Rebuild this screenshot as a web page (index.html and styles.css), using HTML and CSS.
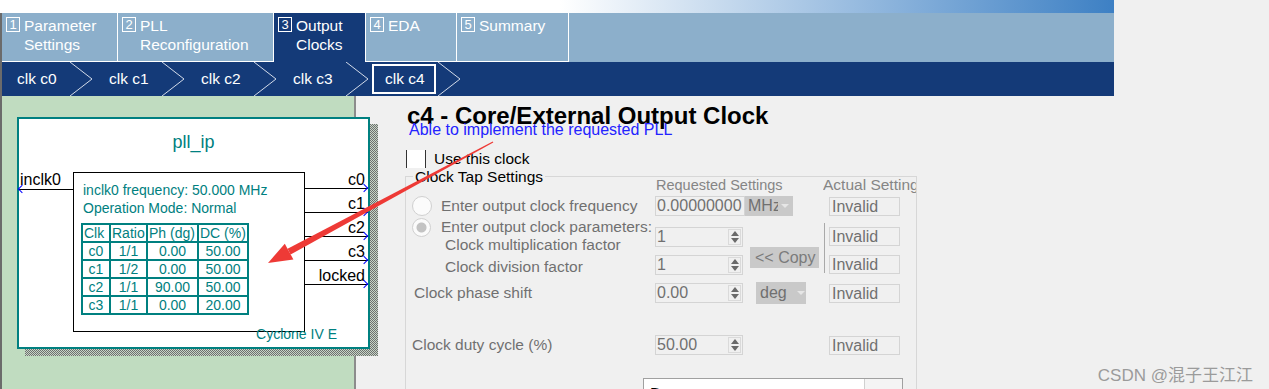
FILE: index.html
```html
<html lang="en">
<head>
    <meta charset="UTF-8">
    <title>ALTPLL - Output Clocks</title>
    <link rel="stylesheet" href="styles.css">
</head>
<body>
    <div class="top-strip"></div>

    <div class="shell">
        <div class="tabs">
            <div class="tab tab-params"><span class="tab-num">1</span><span class="tab-label">Parameter<br>Settings</span></div>
            <div class="tab tab-reconf"><span class="tab-num">2</span><span class="tab-label">PLL<br>Reconfiguration</span></div>
            <div class="tab tab-clocks tab-active"><span class="tab-num">3</span><span class="tab-label">Output<br>Clocks</span></div>
            <div class="tab tab-eda"><span class="tab-num">4</span><span class="tab-label">EDA</span></div>
            <div class="tab tab-summary"><span class="tab-num">5</span><span class="tab-label">Summary</span></div>
        </div>

        <div class="crumbs">
            <div class="crumb"><span class="crumb-text">clk c0</span><svg viewBox="0 0 22 34"><polyline points="0,0 22,17 0,34"/></svg></div>
            <div class="crumb"><span class="crumb-text">clk c1</span><svg viewBox="0 0 22 34"><polyline points="0,0 22,17 0,34"/></svg></div>
            <div class="crumb"><span class="crumb-text">clk c2</span><svg viewBox="0 0 22 34"><polyline points="0,0 22,17 0,34"/></svg></div>
            <div class="crumb"><span class="crumb-text">clk c3</span><svg viewBox="0 0 22 34"><polyline points="0,0 22,17 0,34"/></svg></div>
            <div class="crumb crumb-current"><span class="crumb-text">clk c4</span><svg viewBox="0 0 22 34"><polyline points="0,0 22,17 0,34"/></svg></div>
        </div>

        <div class="main">
            <div class="canvas">
                <div class="diagram-wrap">
                    <div class="diagram">
                        <div class="diagram-title">pll_ip</div>
                        <div class="diagram-row">
                            <div class="ports-in">
                                <div class="port port-in">inclk0</div>
                            </div>
                            <div class="core">
                                <div class="core-line">inclk0 frequency: 50.000 MHz</div>
                                <div class="core-line">Operation Mode: Normal</div>
                                <table class="clk-table">
                                    <tr><th class="col-clk">Clk</th><th class="col-ratio">Ratio</th><th class="col-ph">Ph (dg)</th><th class="col-dc">DC (%)</th></tr>
                                    <tr><td>c0</td><td>1/1</td><td>0.00</td><td>50.00</td></tr>
                                    <tr><td>c1</td><td>1/2</td><td>0.00</td><td>50.00</td></tr>
                                    <tr><td>c2</td><td>1/1</td><td>90.00</td><td>50.00</td></tr>
                                    <tr><td>c3</td><td>1/1</td><td>0.00</td><td>20.00</td></tr>
                                </table>
                            </div>
                            <div class="ports-out">
                                <div class="port port-out port-first">c0</div>
                                <div class="port port-out">c1</div>
                                <div class="port port-out">c2</div>
                                <div class="port port-out">c3</div>
                                <div class="port port-out">locked</div>
                            </div>
                        </div>
                        <div class="diagram-foot">Cyclone IV E</div>
                    </div>
                </div>
            </div>

            <div class="form">
                <div class="form-title">c4 - Core/External Output Clock</div>
                <div class="form-status">Able to implement the requested PLL</div>

                <div class="use-row">
                    <span class="check"></span>
                    <span>Use this clock</span>
                </div>

                <div class="group">
                    <div class="group-title">Clock Tap Settings</div>
                    <div class="head-row">
                        <span class="head-req">Requested Settings</span>
                        <span class="head-act">Actual Settings</span>
                    </div>

                    <div class="row row-freq">
                        <div class="cell-label"><span class="radio"></span>Enter output clock frequency</div>
                        <div class="field">0.00000000</div>
                        <div class="combo combo-mhz"><span class="combo-text">MHz</span><span class="combo-arrow"></span></div>
                        <div class="invalid invalid-freq">Invalid</div>
                    </div>

                    <div class="params">
                        <div class="params-labels">
                            <div class="param-line"><span class="radio radio-on"></span>Enter output clock parameters:</div>
                            <div class="param-line param-sub">Clock multiplication factor</div>
                            <div class="param-line param-sub param-div">Clock division factor</div>
                        </div>
                        <div class="params-req">
                            <div class="spin spin-mult"><span class="spin-val">1</span><span class="spin-btn"><i class="arr-up"></i><i class="arr-down"></i></span></div>
                            <div class="spin spin-div"><span class="spin-val">1</span><span class="spin-btn"><i class="arr-up"></i><i class="arr-down"></i></span></div>
                        </div>
                        <div class="params-mid">
                            <div class="copy">&lt;&lt; Copy</div>
                        </div>
                        <div class="bracket"></div>
                        <div class="params-act">
                            <div class="invalid invalid-mult">Invalid</div>
                            <div class="invalid invalid-div">Invalid</div>
                        </div>
                    </div>

                    <div class="row row-phase">
                        <div class="cell-label label-phase">Clock phase shift</div>
                        <div class="spin"><span class="spin-val">0.00</span><span class="spin-btn"><i class="arr-up"></i><i class="arr-down"></i></span></div>
                        <div class="combo combo-deg"><span class="combo-text">deg</span><span class="combo-arrow"></span></div>
                        <div class="invalid invalid-phase">Invalid</div>
                    </div>

                    <div class="row row-duty">
                        <div class="cell-label label-duty">Clock duty cycle (%)</div>
                        <div class="spin"><span class="spin-val">50.00</span><span class="spin-btn"><i class="arr-up"></i><i class="arr-down"></i></span></div>
                        <div class="invalid invalid-duty">Invalid</div>
                    </div>

                    <div class="select-box">
                        <span class="select-text">Do not use</span>
                        <span class="select-arrow"></span>
                    </div>
                </div>
            </div>
        </div>
    </div>

    <!-- red annotation arrow drawn over the screenshot -->
    <svg class="annot" width="1269" height="389" viewBox="0 0 1269 389">
        <polygon points="493.3,142.5 492.7,141.5 287.6,248.8 290.6,254.4" />
        <polygon points="268,263 284.8,243.7 293.4,259.5" />
    </svg>

    <div class="watermark">CSDN @混子王江江</div>
</body>
</html>
```

FILE: styles.css
```css
* {
    box-sizing: border-box;
}
body {
    margin: 0;
    width: 1269px;
    height: 389px;
    overflow: hidden;
    position: relative;
    background-color: #f0f0f0;
    font-family: "Liberation Sans", Arial, sans-serif;
}
.top-strip {
    width: 1114px;
    height: 13px;
    background: linear-gradient(90deg, #fff 560px, #3d80c4 1114px);
}
.shell {
    border-left: 2px solid #6b6b6b;
}

/* wizard tabs */
.tabs {
    display: flex;
    width: 1112px;
    height: 49px;
    background-color: #8cafcb;
}
.tab {
    display: flex;
    align-items: flex-start;
    padding: 3px 0 0 4px;
    border-right: 1px solid #fff;
    border-bottom: 1px solid #fff;
    color: #fff;
    font-size: 15.5px;
    line-height: 19px;
}
.tab-active {
    background-color: #143a78;
    border-bottom: none;
}
.tab-params { width: 116px; }
.tab-reconf { width: 156px; }
.tab-clocks { width: 92px; }
.tab-eda { width: 91px; }
.tab-summary { width: 112px; }
.tab-num {
    width: 14px;
    height: 15px;
    margin-top: 1px;
    border: 1px solid #fff;
    font-size: 13px;
    line-height: 13px;
    text-align: center;
}
.tab-label {
    margin-left: 4px;
}

/* clock breadcrumb */
.crumbs {
    display: flex;
    width: 1112px;
    height: 34px;
    background-color: #143a78;
    color: #fff;
    font-size: 15.5px;
}
.crumb {
    display: flex;
    align-items: center;
    width: 92px;
}
.crumb-text {
    width: 68px;
    padding-left: 15px;
}
.crumb-current .crumb-text {
    width: 64px;
    height: 30px;
    margin: 0 2px;
    padding-left: 11px;
    border: 2px solid #fff;
    line-height: 26px;
}
.crumb svg {
    display: block;
    width: 22px;
    height: 34px;
}
.crumb polyline {
    fill: none;
    stroke: #d3dbe9;
    stroke-width: 1;
}

.main {
    display: flex;
    height: 293px;
}

/* block diagram */
.canvas {
    flex: none;
    width: 354px;
    padding: 21px 0 0 15px;
    background-color: #c0dcc0;
    border-right: 2px solid #8c8c8c;
}
.diagram-wrap {
    position: relative;
    z-index: 1;
    width: 353px;
}
.diagram-wrap::before {
    content: "";
    position: absolute;
    left: 8px;
    top: 7px;
    right: -8px;
    bottom: -7px;
    background: repeating-conic-gradient(#6f6f6f 0 25%, #c6d6c6 0 50%) 0 0 / 2px 2px;
}
.diagram {
    position: relative;
    border: 2px solid #008080;
    background-color: #fff;
}
.diagram-title {
    padding: 13px 0 20px;
    color: #008080;
    font-size: 18px;
    line-height: 20px;
    text-align: center;
}
.diagram-row {
    display: flex;
}
.ports-in {
    width: 54px;
}
.port {
    position: relative;
    border-bottom: 1px solid #000;
    color: #000;
    font-size: 16px;
    line-height: 16px;
}
.port-in {
    height: 18px;
    padding-left: 1px;
}
.port-in::before {
    content: "";
    position: absolute;
    left: 0;
    bottom: -3px;
    width: 5px;
    height: 5px;
    border-left: 1px solid #00f;
    border-bottom: 1px solid #00f;
    transform: rotate(45deg);
}
.core {
    width: 232px;
    height: 160px;
    padding: 8px 0 0 9px;
    border: 1px solid #000;
    color: #008080;
    font-size: 14px;
}
.core-line {
    line-height: 18px;
}
.clk-table {
    margin: 6px 0 0 -2px;
    border-collapse: collapse;
    color: #008080;
    font-size: 14px;
}
.clk-table th,
.clk-table td {
    height: 18px;
    padding: 0;
    border: 2px solid #008080;
    font-weight: normal;
    line-height: 14px;
    text-align: center;
    white-space: nowrap;
}
.clk-table th {
    padding-left: 1px;
    text-align: left;
}
.col-clk { width: 28px; }
.col-ratio { width: 37px; }
.col-ph { width: 51px; }
.col-dc { width: 50px; }
.ports-out {
    width: 63px;
}
.port-out {
    height: 24px;
    padding: 7px 3px 0 0;
    text-align: right;
}
.port-first {
    height: 17px;
    padding-top: 0;
}
.port-out::after {
    content: "";
    position: absolute;
    right: 1px;
    bottom: -3px;
    width: 5px;
    height: 5px;
    border-right: 1px solid #00f;
    border-top: 1px solid #00f;
    transform: rotate(45deg);
}
.diagram-foot {
    margin-top: -6px;
    padding: 0 31px 5px 0;
    color: #008080;
    font-size: 14px;
    line-height: 16px;
    text-align: right;
}

/* clock settings form */
.form {
    flex: 1;
    padding-left: 49px;
}
.form-title {
    margin-top: 6px;
    padding-left: 2px;
    font-size: 24px;
    font-weight: bold;
    line-height: 28px;
    white-space: nowrap;
}
.form-status {
    margin-top: -9px;
    padding-left: 4px;
    color: #2323ff;
    font-size: 16px;
    line-height: 18px;
}
.use-row {
    display: flex;
    align-items: center;
    height: 18px;
    margin-top: 11px;
    padding-left: 1px;
    font-size: 15.5px;
}
.check {
    width: 20px;
    height: 18px;
    margin-right: 8px;
    background-color: #fff;
    border-left: 1px solid #333;
    border-right: 1px solid #333;
}
.group {
    width: 512px;
    height: 260px;
    margin-top: 8px;
    border: 1px solid #d7d7d7;
    color: #707070;
    font-size: 15.5px;
}
.group-title {
    display: table;
    margin: -9px 0 0 7px;
    padding: 0 2px;
    background-color: #f0f0f0;
    color: #000;
    line-height: 18px;
}
.head-row {
    display: flex;
    height: 16px;
    margin-top: -9px;
    color: #858585;
    font-size: 14.5px;
    line-height: 16px;
    white-space: nowrap;
}
.head-req {
    width: 167px;
    margin-left: 250px;
}
.head-act {
    width: 93px;
    overflow: hidden;
    font-size: 15.5px;
}
.row {
    display: flex;
    align-items: center;
}
.row-freq {
    height: 24px;
    margin-top: 1px;
}
.row-phase {
    height: 32px;
}
.row-duty {
    height: 32px;
    margin-top: 20px;
}
.cell-label {
    display: flex;
    align-items: center;
    flex: none;
    width: 249px;
    white-space: nowrap;
}
.label-phase {
    padding-left: 8px;
}
.label-duty {
    padding-left: 6px;
}
.radio {
    flex: none;
    width: 20px;
    height: 20px;
    margin: 0 9px 0 6px;
    border: 1px solid #d0d0d0;
    border-radius: 50%;
    background-color: #fbfbfb;
}
.radio-on {
    width: 19px;
    height: 19px;
    margin-right: 10px;
    background: radial-gradient(circle, #c3c3c3 0 4.5px, #fbfbfb 5.5px);
}
.field {
    width: 90px;
    height: 20px;
    padding-left: 1px;
    border: 1px solid #d4d4d4;
    font-size: 16px;
    line-height: 18px;
}
.combo {
    display: flex;
    align-items: center;
    background-color: #c9c9c9;
    font-size: 16px;
}
.combo-mhz {
    width: 48px;
    height: 20px;
}
.combo-deg {
    width: 50px;
    height: 22px;
    margin-left: 13px;
}
.combo-text {
    width: 33px;
    padding-left: 3px;
    overflow: hidden;
    white-space: nowrap;
}
.combo-deg .combo-text {
    width: 38px;
    padding-left: 4px;
}
.combo-arrow {
    width: 0;
    height: 0;
    margin-left: 3px;
    border-left: 4px solid transparent;
    border-right: 4px solid transparent;
    border-top: 4px solid #e6e6e6;
}
.invalid {
    width: 71px;
    height: 19px;
    padding-left: 2px;
    border: 1px solid #d4d4d4;
    font-size: 16px;
    line-height: 17px;
}
.invalid-freq {
    margin-left: 36px;
}
.invalid-phase {
    margin-left: 23px;
}
.invalid-duty {
    margin-left: 86px;
}
.params {
    display: flex;
    height: 59px;
}
.params-labels {
    width: 249px;
    white-space: nowrap;
}
.param-line {
    display: flex;
    align-items: center;
    height: 18px;
}
.param-sub {
    padding-left: 39px;
}
.param-div {
    margin-top: 4px;
}
.params-req {
    width: 90px;
}
.spin {
    display: flex;
    width: 88px;
    height: 20px;
    border: 1px solid #d4d4d4;
    font-size: 16px;
    line-height: 18px;
}
.spin-mult {
    margin-top: 9px;
}
.spin-div {
    margin-top: 8px;
}
.spin-val {
    flex: 1;
    padding-left: 1px;
}
.spin-btn {
    display: flex;
    flex-direction: column;
    justify-content: center;
    align-items: center;
    gap: 2px;
    width: 13px;
    margin: 1px 1px 1px 0;
    border: 1px solid #dadada;
}
.arr-up {
    border-left: 4.5px solid transparent;
    border-right: 4.5px solid transparent;
    border-bottom: 5px solid #6a6a6a;
}
.arr-down {
    border-left: 4.5px solid transparent;
    border-right: 4.5px solid transparent;
    border-top: 5px solid #6a6a6a;
}
.params-mid {
    width: 79px;
}
.copy {
    width: 69px;
    height: 21px;
    margin: 29px 0 0 5px;
    padding-left: 5px;
    overflow: hidden;
    background-color: #c9c9c9;
    color: #7b7b7b;
    font-size: 16px;
    line-height: 21px;
    white-space: nowrap;
}
.bracket {
    width: 1px;
    height: 50px;
    margin-top: 5px;
    background-color: #a9a9a9;
}
.params-act {
    margin-left: 4px;
}
.invalid-mult,
.invalid-div {
    margin-top: 9px;
}
.select-box {
    display: flex;
    width: 260px;
    height: 26px;
    margin: 17px 0 0 237px;
    border: 1px solid #a0a0a0;
    background-color: #fff;
    color: #000;
}
.select-text {
    flex: 1;
    padding: 7px 0 0 6px;
    font-size: 16px;
}
.select-arrow {
    width: 38px;
    border-left: 1px solid #d0d0d0;
    background-color: #f4f4f4;
}

.annot {
    position: absolute;
    left: 0;
    top: 0;
    z-index: 5;
    pointer-events: none;
}
.annot polygon {
    fill: #ee3a36;
}
.watermark {
    position: absolute;
    right: 16px;
    top: 361px;
    z-index: 6;
    color: #9b9b9b;
    font-family: "Liberation Sans", "Noto Sans CJK SC", sans-serif;
    font-size: 17px;
}
```
